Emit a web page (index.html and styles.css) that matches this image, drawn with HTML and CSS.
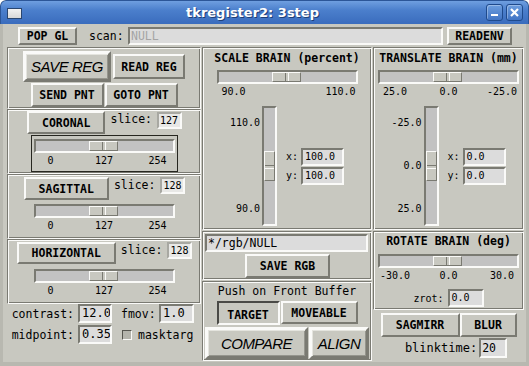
FILE: index.html
```html
<!DOCTYPE html>
<html lang="en">
<head>
  <meta charset="UTF-8">
  <title>tkregister2: 3step</title>
  <link rel="stylesheet" href="styles.css">
</head>
<body>

  <div class="window">
    <div class="titlebar">
      <span class="win-icon"></span>
      <span class="win-title">tkregister2: 3step</span>
      <span class="win-btn">
        <svg width="9" height="9" viewBox="0 0 9 9"><rect x="1" y="6" width="7" height="2" fill="#fff"/></svg>
      </span>
      <span class="win-btn">
        <svg width="9" height="9" viewBox="0 0 9 9"><path d="M1 1L8 8M8 1L1 8" stroke="#fff" stroke-width="2.2"/></svg>
      </span>
    </div>

    <div class="client">
      <div class="toprow">
        <div class="btn w-popgl">POP GL</div>
        <span class="lbl scan-lbl">scan:</span>
        <div class="entry scan">NULL</div>
        <div class="btn w-readenv">READENV</div>
      </div>

      <div class="main">
        <!-- left column -->
        <div class="col col-left">
          <div class="group g-reg">
            <div class="row r1">
              <div class="btn big w-savereg">SAVE REG</div>
              <div class="btn w-readreg">READ REG</div>
            </div>
            <div class="row r2">
              <div class="btn w-pnt">SEND PNT</div>
              <div class="btn w-pnt">GOTO PNT</div>
            </div>
          </div>

          <div class="group g-slice g-cor">
            <div class="slice-head">
              <div class="btn view">CORONAL</div>
              <span class="lbl">slice:</span>
              <div class="entry small">127</div>
            </div>
            <div class="hscale focus">
              <div class="trough"><span class="handle"></span></div>
              <div class="ticks"><span>0</span><span>127</span><span>254</span></div>
            </div>
          </div>

          <div class="group g-slice g-sag">
            <div class="slice-head">
              <div class="btn view">SAGITTAL</div>
              <span class="lbl">slice:</span>
              <div class="entry small">128</div>
            </div>
            <div class="hscale">
              <div class="trough"><span class="handle"></span></div>
              <div class="ticks"><span>0</span><span>127</span><span>254</span></div>
            </div>
          </div>

          <div class="group g-slice g-hor">
            <div class="slice-head">
              <div class="btn view">HORIZONTAL</div>
              <span class="lbl">slice:</span>
              <div class="entry small">128</div>
            </div>
            <div class="hscale">
              <div class="trough"><span class="handle"></span></div>
              <div class="ticks"><span>0</span><span>127</span><span>254</span></div>
            </div>
          </div>

          <div class="params">
            <span class="lbl plabel">contrast:</span>
            <div class="entry pentry">12.0</div>
            <span class="lbl plabel2">fmov:</span>
            <div class="entry pentry">1.0</div>
            <span class="lbl plabel">midpoint:</span>
            <div class="entry pentry">0.35</div>
            <span class="check"><span class="box"></span><span class="lbl">masktarg</span></span>
          </div>
        </div>

        <!-- middle column -->
        <div class="col col-mid">
          <div class="group g-xform">
            <div class="gtitle">SCALE BRAIN (percent)</div>
            <div class="hscale">
              <div class="trough"><span class="handle"></span></div>
              <div class="ticks"><span>90.0</span><span>110.0</span></div>
            </div>
            <div class="vrow">
              <div class="vlabels"><span>110.0</span><span>90.0</span></div>
              <div class="vscale">
                <div class="trough"><span class="handle"></span></div>
              </div>
              <div class="xy">
                <span>x:</span><div class="entry xyentry">100.0</div>
                <span>y:</span><div class="entry xyentry">100.0</div>
              </div>
            </div>
          </div>

          <div class="group g-rgb">
            <div class="entry rgb">*/rgb/NULL</div>
            <div class="btn w-savergb">SAVE RGB</div>
          </div>

          <div class="group g-push">
            <div class="push-title">Push on Front Buffer</div>
            <div class="row r-buf">
              <div class="btn sunken w-target">TARGET</div>
              <div class="btn w-moveable">MOVEABLE</div>
            </div>
            <div class="row r-cmp">
              <div class="btn big w-compare">COMPARE</div>
              <div class="btn big w-align">ALIGN</div>
            </div>
          </div>
        </div>

        <!-- right column -->
        <div class="col col-right">
          <div class="group g-xform">
            <div class="gtitle">TRANSLATE BRAIN (mm)</div>
            <div class="hscale">
              <div class="trough"><span class="handle"></span></div>
              <div class="ticks"><span>25.0</span><span>0.0</span><span>-25.0</span></div>
            </div>
            <div class="vrow">
              <div class="vlabels"><span>-25.0</span><span>0.0</span><span>25.0</span></div>
              <div class="vscale">
                <div class="trough"><span class="handle"></span></div>
              </div>
              <div class="xy">
                <span>x:</span><div class="entry xyentry">0.0</div>
                <span>y:</span><div class="entry xyentry">0.0</div>
              </div>
            </div>
          </div>

          <div class="group g-rot">
            <div class="gtitle">ROTATE BRAIN (deg)</div>
            <div class="hscale">
              <div class="trough"><span class="handle"></span></div>
              <div class="ticks"><span>-30.0</span><span>0.0</span><span>30.0</span></div>
            </div>
            <div class="zrot">
              <span>zrot:</span>
              <div class="entry zentry">0.0</div>
            </div>
          </div>

          <div class="row r-mirr">
            <div class="btn w-sagmirr">SAGMIRR</div>
            <div class="btn w-blur">BLUR</div>
          </div>
          <div class="blink">
            <span class="lbl">blinktime:</span>
            <div class="entry bentry">20</div>
          </div>
        </div>
      </div>
    </div>
  </div>

</body>
</html>
```

FILE: styles.css
```css
:root {
  --bg: #c8c8c0;
  --lt: #fafaf8;
  --dk: #7a7a72;
  --trough: #c2c2c2;
  --entry: #dcdcdc;
}

* {
  box-sizing: border-box;
}

body {
  margin: 0;
  background: #fff;
  font-family: "DejaVu Sans Mono", monospace;
  color: #000;
}

/* window frame */
.window {
  width: 529px;
  height: 366px;
  display: flex;
  flex-direction: column;
  background: #b8b8b0;
  border-radius: 6px 6px 0 0;
  overflow: hidden;
}

.titlebar {
  height: 24px;
  flex: none;
  display: flex;
  align-items: center;
  padding: 0 5px 0 6px;
  background: linear-gradient(#6f9fe0, #4b7fcc 40%, #3a6cbd);
  border: 1px solid #2c5698;
  border-bottom: none;
  border-radius: 6px 6px 0 0;
}

.win-icon {
  width: 15px;
  height: 11px;
  margin-top: 1px;
  background: linear-gradient(#f2f2f2, #d8d8d8);
  border: 1px solid #2a4670;
}

.win-title {
  flex: 1;
  text-align: center;
  color: #fff;
  font: bold 13px "DejaVu Sans", sans-serif;
  text-shadow: 1px 1px 0 #1f3f76;
}

.win-btn {
  width: 17px;
  height: 17px;
  margin-left: 3px;
  display: flex;
  align-items: center;
  justify-content: center;
  border: 1px solid #1f4a8c;
  border-radius: 3px;
  background: linear-gradient(#6d9edf, #4174c4);
  box-shadow: inset 1px 1px 0 rgba(255, 255, 255, 0.3);
}

.client {
  flex: 1;
  margin: 0 3px 4px 3px;
  padding-top: 3px;
  background: var(--bg);
}

/* widgets */
.btn {
  display: flex;
  align-items: center;
  justify-content: center;
  flex: none;
  border: 2px solid;
  border-color: var(--lt) var(--dk) var(--dk) var(--lt);
  font: bold 11.5px "DejaVu Sans Mono", monospace;
  white-space: nowrap;
}

.btn.big {
  border-width: 3px;
  box-shadow: inset 1px 1px 0 #e4e4de, inset -1px -1px 0 #95958d;
  font: italic 15px "Liberation Sans", sans-serif;
  letter-spacing: -0.5px;
}

.btn.sunken {
  border-color: #4a4a46 var(--lt) var(--lt) #4a4a46;
  padding-top: 3px;
}

.lbl {
  font-size: 11.5px;
  white-space: nowrap;
}

.entry {
  flex: none;
  border: 2px solid;
  border-color: var(--dk) var(--lt) var(--lt) var(--dk);
  background: var(--entry);
  padding-left: 1px;
  white-space: nowrap;
  overflow: hidden;
}

.group {
  border: 1px solid;
  border-color: var(--dk) var(--lt) var(--lt) var(--dk);
  box-shadow: inset 1px 1px 0 var(--lt), inset -1px -1px 0 var(--dk);
}

.row {
  display: flex;
  justify-content: center;
}

/* top row */
.toprow {
  display: flex;
  align-items: center;
  height: 18px;
  padding-left: 15px;
}

.w-popgl { width: 59px; height: 18px; }
.scan-lbl { margin-left: 12px; width: 35px; margin-right: 4px; }
.scan {
  width: 315px;
  height: 18px;
  font-size: 11.5px;
  line-height: 14px;
  color: #a4a4a4;
}
.w-readenv { width: 65px; height: 18px; margin-left: 4px; }

/* main grid */
.main {
  display: flex;
  gap: 1px;
  margin-top: 2px;
  padding-left: 4px;
}

.col {
  display: flex;
  flex-direction: column;
}

.col-left { width: 194px; }
.col-mid { width: 170px; }
.col-right { width: 151px; }

/* register buttons */
.g-reg {
  height: 62px;
  padding-top: 2px;
}

.r1 {
  align-items: center;
  gap: 2px;
  margin-top: 1px;
  height: 31px;
}

.w-savereg { width: 88px; height: 31px; }
.w-readreg { width: 72px; height: 25px; }

.r2 {
  gap: 1px;
  margin-top: 1px;
}

.w-pnt { width: 73px; height: 24px; }

/* slice frames */
.g-slice {
  height: 65px;
  padding-top: 1px;
}

.g-sag, .g-hor { padding-top: 2px; }

.slice-head {
  display: flex;
  justify-content: center;
  align-items: flex-start;
  gap: 5px;
  padding-left: 1px;
}

.slice-head .lbl {
  line-height: 16px;
}

.view {
  height: 23px;
  padding: 0 13px;
}

.g-hor .view { height: 22px; }

.entry.small {
  width: 25px;
  height: 17px;
  margin-top: 1px;
  font-size: 10px;
  line-height: 13px;
  background: #e8e8e6;
  border-color: #a8a8a2 var(--lt) var(--lt) #a8a8a2;
}

.g-sag .entry.small, .g-hor .entry.small { margin-top: 0; }

/* scales */
.hscale {
  width: 147px;
  margin: 1px auto 0;
  border: 1px solid transparent;
  padding: 3px 2px 2px;
}

.g-sag .hscale { margin-top: 0; }

.hscale.focus {
  border-color: #26261f;
}

.trough {
  position: relative;
  height: 14px;
  border: 2px solid;
  border-color: var(--dk) var(--lt) var(--lt) var(--dk);
  background: var(--trough);
}

.handle {
  position: absolute;
  top: 0;
  bottom: 0;
  left: 53px;
  width: 29px;
  background: var(--bg);
  border: 1px solid;
  border-color: var(--lt) var(--dk) var(--dk) var(--lt);
}

.handle::after {
  content: "";
  position: absolute;
  top: 0;
  bottom: 0;
  left: 12px;
  width: 2px;
  border-left: 1px solid var(--dk);
  border-right: 1px solid var(--lt);
}

.ticks {
  display: flex;
  justify-content: space-between;
  padding: 0 2px;
  font-size: 10px;
  line-height: 16px;
}

.ticks span {
  width: 30px;
  text-align: center;
}

.ticks span:only-child,
.ticks span:first-child:nth-last-child(2) ~ span {
  text-align: center;
}

/* transform frames */
.g-xform {
  height: 183px;
  padding-top: 2px;
}

.gtitle {
  text-align: center;
  font-weight: bold;
  font-size: 11.5px;
  line-height: 16px;
}

.g-xform .hscale { margin-top: 0; }

.vrow {
  display: flex;
  justify-content: center;
  align-items: center;
  height: 126px;
}

.vlabels {
  width: 30px;
  height: 120px;
  padding: 11px 0;
  display: flex;
  flex-direction: column;
  justify-content: space-between;
  align-items: flex-end;
  font-size: 10px;
  line-height: 12px;
}

.vscale {
  border: 1px solid transparent;
  padding: 2px 2px 2px 1px;
}

.vscale .trough {
  width: 15px;
  height: 120px;
}

.vscale .handle {
  top: 43px;
  bottom: auto;
  left: 0;
  right: 0;
  width: auto;
  height: 30px;
}

.vscale .handle::after {
  top: 13px;
  bottom: auto;
  left: 0;
  right: 0;
  width: auto;
  height: 2px;
  border: none;
  border-top: 1px solid var(--dk);
  border-bottom: 1px solid var(--lt);
}

.xy {
  display: grid;
  grid-template-columns: 15px 43px;
  row-gap: 1px;
  align-items: center;
  margin-left: 6px;
  font-size: 10px;
}

.xyentry {
  height: 18px;
  line-height: 14px;
  font-size: 10px;
  padding-left: 2px;
}

/* rgb frame */
.g-rgb {
  height: 49px;
  margin-top: 1px;
  padding: 2px 0 0 2px;
  display: flex;
  flex-direction: column;
}

.rgb {
  width: 163px;
  height: 18px;
  font-size: 11.5px;
  line-height: 14px;
}

.w-savergb {
  width: 85px;
  height: 24px;
  margin: 2px 0 0 40px;
}

/* push frame */
.g-push {
  height: 80px;
  margin-top: 1px;
  padding-top: 1px;
}

.push-title {
  text-align: center;
  font-size: 11.5px;
  line-height: 16px;
}

.r-buf {
  gap: 1px;
  margin-top: 2px;
  align-items: flex-start;
}

.w-target { width: 63px; height: 24px; }
.w-moveable { width: 77px; height: 23px; }

.r-cmp {
  gap: 1px;
  margin-top: 2px;
}

.w-compare { width: 103px; height: 32px; font-size: 16px; }
.w-align { width: 60px; height: 32px; font-size: 16px; }

/* rotate frame */
.g-rot {
  height: 79px;
  margin-top: 1px;
  padding-top: 1px;
}

.zrot {
  display: flex;
  justify-content: center;
  align-items: center;
  gap: 4px;
  margin-top: 2px;
  font-size: 10px;
}

.zentry {
  width: 36px;
  height: 18px;
  line-height: 14px;
  padding-left: 2px;
}

.r-mirr {
  margin-top: 3px;
}

.w-sagmirr { width: 79px; height: 24px; }
.w-blur { width: 57px; height: 24px; }

.blink {
  display: flex;
  justify-content: center;
  align-items: center;
  gap: 2px;
  margin-top: 1px;
  padding-left: 15px;
}

.blink .lbl { font-size: 12px; }

.bentry {
  width: 28px;
  height: 20px;
  font-size: 11.5px;
  line-height: 16px;
}

/* contrast params */
.params {
  display: grid;
  grid-template-columns: 71px 34px 47px 35px;
  grid-auto-rows: 19px;
  row-gap: 2px;
  align-items: center;
}

.plabel {
  text-align: right;
  padding-right: 4px;
}

.plabel2 {
  padding-left: 9px;
}

.pentry {
  height: 19px;
  font-size: 12px;
  line-height: 15px;
  padding-left: 2px;
}

.check {
  grid-column: 3 / 5;
  display: flex;
  align-items: center;
  gap: 6px;
  padding-left: 10px;
}

.box {
  width: 10px;
  height: 10px;
  background: #b4b4ac;
  border: 1px solid;
  border-color: #55554f var(--lt) var(--lt) #55554f;
}
```
